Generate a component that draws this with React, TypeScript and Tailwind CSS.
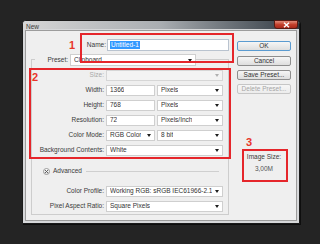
import React from 'react';

const Arrow: React.FC<{ disabled?: boolean }> = ({ disabled }) => (
  <span
    className={
      disabled
        ? 'ml-auto w-0 h-0 border-l-[2px] border-r-[2px] border-t-[3px] border-l-transparent border-r-transparent border-t-[#b0b0b0]'
        : 'ml-auto w-0 h-0 border-l-[2px] border-r-[2px] border-t-[3px] border-l-transparent border-r-transparent border-t-[#1e1e1e]'
    }
  />
);

interface FieldProps {
  w: string;
  text?: string;
  select?: boolean;
  disabled?: boolean;
}

const Field: React.FC<FieldProps> = ({ w, text, select, disabled }) => (
  <div
    className={`${w} h-full flex items-center px-[3px] border ${
      disabled ? 'bg-[#f3f3f3] border-[#d6d6d6] text-[#a0a0a0]' : 'bg-white border-[#cfcfcf] text-[#333]'
    }`}
  >
    <span className="whitespace-nowrap overflow-hidden">{text}</span>
    {select && <Arrow disabled={disabled} />}
  </div>
);

const Row: React.FC<{ label: string; dim?: boolean; children: React.ReactNode }> = ({ label, dim, children }) => (
  <div className="flex h-[11px] items-center">
    <span className={`w-[74px] pr-[2px] text-right whitespace-nowrap ${dim ? 'text-[#a8a8a8]' : 'text-[#3a3a3a]'}`}>
      {label}
    </span>
    <div className="flex h-full gap-[2px]">{children}</div>
  </div>
);

const Button: React.FC<{ label: string; primary?: boolean; disabled?: boolean; className?: string }> = ({
  label,
  primary,
  disabled,
  className,
}) => (
  <div
    className={`h-[10px] flex items-center justify-center rounded-[2px] border bg-gradient-to-b from-[#f6f6f6] to-[#dedede] ${
      primary
        ? 'border-[#5b9bd0] text-[#333]'
        : disabled
        ? 'border-[#c6c6c6] text-[#a6a6a6] from-[#f4f4f4] to-[#ececec]'
        : 'border-[#8e8e8e] text-[#333]'
    } ${className ?? ''}`}
  >
    {label}
  </div>
);

export default function App() {
  return (
    <div className="w-[320px] h-[244px] bg-[#242424] pt-[20px] pl-[22px] font-['Liberation_Sans',Arial,sans-serif] text-[6.5px] leading-none">
      <div className="w-[278px] h-[204px] border border-[#1b1b1b] rounded-t-[4px] bg-[#d7d8da] flex flex-col shadow-[1px_1px_0_#0e0e0e]">
        {/* title bar */}
        <div className="h-[8px] flex items-start bg-gradient-to-r from-[#d6d6d6] via-[#a9adb1] to-[#333b43] rounded-t-[3px]">
          <span className="ml-[3px] mt-[3px] text-[#3b3b3b]">New</span>
          <div className="ml-auto mr-[1px] -mt-[1px] w-[24px] h-[9px] rounded-b-[3px] border border-[#5a1a12] bg-gradient-to-b from-[#e08a78] via-[#c4402c] to-[#a8281a] flex items-center justify-center">
            <svg width="7" height="6" viewBox="0 0 7 6">
              <path d="M1 0.8 L6 5.2 M6 0.8 L1 5.2" stroke="#fff" strokeWidth="1.5" />
            </svg>
          </div>
        </div>

        {/* client */}
        <div className="relative flex-1 mx-[2px] mb-[2px] mt-[1px] border border-[#9c9c9c] bg-[#efefef] flex">
          {/* left column */}
          <div className="w-[204px] flex flex-col">
            <div className="mt-[8px] h-[12px] flex items-center">
              <span className="w-[81px] pr-[1px] text-right text-[#3a3a3a]">Name:</span>
              <div className="w-[122px] h-full bg-white border border-[#b9c3cf] flex items-center pl-[2px]">
                <span className="bg-[#3399ff] text-white px-[1px] py-[1px]">Untitled-1</span>
              </div>
            </div>

            {/* group box */}
            <div className="mt-[8px] ml-[5px] w-[198px] border border-[#cdcdcd] pb-[2px] flex flex-col">
              <div className="-mt-[6px] h-[12px] flex items-center">
                <span className="ml-[3px] w-[35px] h-full bg-[#efefef] pr-[2px] flex items-center justify-end text-[#3a3a3a]">
                  Preset:
                </span>
                <Field w="w-[126px]" text="Clipboard" select />
              </div>

              <div className="mt-[4px] flex flex-col gap-[4px]">
                <Row label="Size:" dim>
                  <Field w="w-[117px]" select disabled />
                </Row>
                <Row label="Width:">
                  <Field w="w-[49px]" text="1366" />
                  <Field w="w-[66px]" text="Pixels" select />
                </Row>
                <Row label="Height:">
                  <Field w="w-[49px]" text="768" />
                  <Field w="w-[66px]" text="Pixels" select />
                </Row>
                <Row label="Resolution:">
                  <Field w="w-[49px]" text="72" />
                  <Field w="w-[66px]" text="Pixels/Inch" select />
                </Row>
                <Row label="Color Mode:">
                  <Field w="w-[49px]" text="RGB Color" select />
                  <Field w="w-[66px]" text="8 bit" select />
                </Row>
                <Row label="Background Contents:">
                  <Field w="w-[117px]" text="White" select />
                </Row>
              </div>

              <div className="mt-[11px] h-[8px] flex items-center">
                <div className="ml-[11px] w-[7px] h-[7px] rounded-full border border-[#9a9a9a] bg-gradient-to-b from-white to-[#dcdcdc] flex items-center justify-center">
                  <svg width="5" height="5" viewBox="0 0 5 5">
                    <path d="M1 1 L4 4 M4 1 L1 4" stroke="#555" strokeWidth="0.9" />
                  </svg>
                </div>
                <span className="ml-[3px] text-[#3a3a3a]">Advanced</span>
                <div className="flex-1 ml-[4px] mr-[9px] h-px bg-[#cfcfcf]" />
              </div>

              <div className="mt-[11px] flex flex-col gap-[4px]">
                <Row label="Color Profile:">
                  <Field w="w-[117px]" text="Working RGB: sRGB IEC61966-2.1" select />
                </Row>
                <Row label="Pixel Aspect Ratio:">
                  <Field w="w-[117px]" text="Square Pixels" select />
                </Row>
              </div>
            </div>
          </div>

          {/* right column */}
          <div className="ml-[7px] w-[54px] flex flex-col">
            <Button label="OK" primary className="mt-[10px]" />
            <Button label="Cancel" className="mt-[5px]" />
            <Button label="Save Preset..." className="mt-[4px]" />
            <Button label="Delete Preset..." disabled className="mt-[4px]" />
            <div className="mt-[60px] flex flex-col items-center text-[#3a3a3a]">
              <span>Image Size:</span>
              <span className="mt-[5px] text-[#555]">3,00M</span>
            </div>
          </div>

          {/* annotations */}
          <div className="absolute left-[54px] top-[2px] w-[154px] h-[30px] border-2 border-[#e5262b]" />
          <span className="absolute left-[43px] top-[9px] text-[11px] font-bold text-[#e8362a]">1</span>
          <div className="absolute left-[3px] top-[37px] w-[202px] h-[91px] border-2 border-[#e5262b]" />
          <span className="absolute left-[6px] top-[41px] text-[11px] font-bold text-[#e8362a]">2</span>
          <div className="absolute left-[216px] top-[118px] w-[46px] h-[33px] border-2 border-[#e5262b]" />
          <span className="absolute left-[220px] top-[106px] text-[11px] font-bold text-[#e8362a]">3</span>
        </div>
      </div>
    </div>
  );
}
